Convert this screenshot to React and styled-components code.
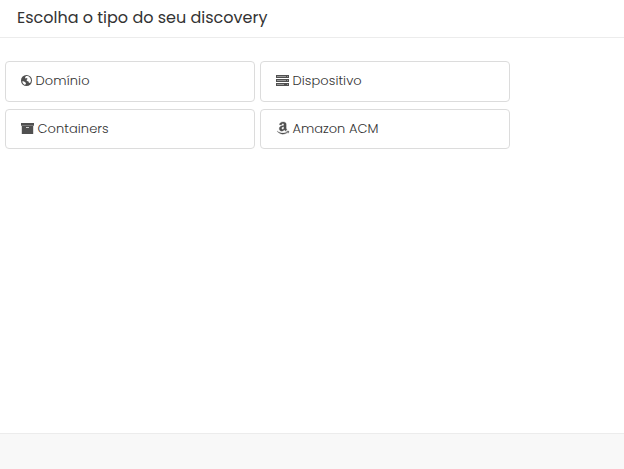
import React from "react";
import styled, { createGlobalStyle } from "styled-components";
import { FaAmazon } from "react-icons/fa";

const GlobalStyle = createGlobalStyle`
  *, *::before, *::after { box-sizing: border-box; }
  body {
    margin: 0;
    background: #fff;
    color: #333;
    font-family: Poppins, Inter, "Open Sans", sans-serif;
  }
`;

const Dialog = styled.main`
  display: flex;
  flex-direction: column;
  height: 469px;
  overflow: hidden;
`;

const Header = styled.header`
  height: 38px;
  flex: none;
  padding-left: 17px;
  border-bottom: 1px solid #ececec;
`;

const Title = styled.h1`
  margin: 0;
  font-size: 16px;
  font-weight: 400;
  line-height: 35px;
  color: #333;
  white-space: nowrap;
`;

const Options = styled.section`
  flex: 1;
  display: grid;
  grid-template-columns: 250px 250px;
  grid-template-rows: 41px 40px;
  gap: 7px 5px;
  padding: 23px 0 0 5px;
`;

const Option = styled.button`
  display: flex;
  align-items: flex-start;
  padding: 9px 0 0 15px;
  border: 1px solid #dcdcdc;
  border-radius: 4px;
  background: #fff;
  color: inherit;
  font: inherit;
  text-align: left;
`;

const Icon = styled.span`
  display: flex;
  align-items: center;
  flex: none;
  height: 18px;
  width: ${({ $width }) => $width}px;
  color: #505050;
`;

const Label = styled.span`
  font-size: 13px;
  font-weight: 300;
  line-height: 20px;
  letter-spacing: ${({ $tracking }) => $tracking}px;
  white-space: nowrap;
`;

const Footer = styled.footer`
  flex: none;
  height: 36px;
  border-top: 1px solid #ececec;
  background: #f8f8f8;
`;

const GlobeIcon = () => (
  <svg width="11" height="11" viewBox="0 0 22 22">
    <circle cx="11" cy="11" r="11" fill="currentColor" />
    <path d="M10 2h3l3 1 3 4 1 4-1 4-3 1-1-3-3-1-1-2 2-2-1-2-3 1-1-2zM3 12l3 1 3 2 1 2-2 3-3-2-2-3z" fill="#fff" />
  </svg>
);

const ServerIcon = () => (
  <svg width="13" height="11" viewBox="0 0 13 11">
    <path d="M0 0h13v3H0zM0 4h13v3H0zM0 8h13v3H0z" fill="currentColor" />
    <path d="M1 1h9v1H1zM1 5h9v1H1zM1 9h7v1H1zM11 1h1v1h-1zM11 5h1v1h-1zM11 9h1v1h-1z" fill="#999" />
  </svg>
);

const ArchiveIcon = () => (
  <svg width="13" height="11" viewBox="0 0 13 11">
    <path d="M0 0h13v2.7H0zM.8 3H12.2v8H.8z" fill="currentColor" />
    <path d="M5 4h3v1H5z" fill="#ccc" />
  </svg>
);

const AmazonIcon = () => (
  <FaAmazon size={14} stroke="currentColor" strokeWidth={10} />
);

const options = [
  { name: "Domínio", Glyph: GlobeIcon, width: 14.5, tracking: 0.12 },
  { name: "Dispositivo", Glyph: ServerIcon, width: 16.5, tracking: 0.06 },
  { name: "Containers", Glyph: ArchiveIcon, width: 16.5, tracking: 0.06 },
  { name: "Amazon ACM", Glyph: AmazonIcon, width: 16.5, tracking: 0 },
];

export default function App() {
  return (
    <Dialog>
      <GlobalStyle />
      <Header><Title>Escolha o tipo do seu discovery</Title></Header>
      <Options>
        {options.map(({ name, Glyph, width, tracking }) => (
          <Option key={name} type="button">
            <Icon $width={width}><Glyph /></Icon>
            <Label $tracking={tracking}>{name}</Label>
          </Option>
        ))}
      </Options>
      <Footer />
    </Dialog>
  );
}
